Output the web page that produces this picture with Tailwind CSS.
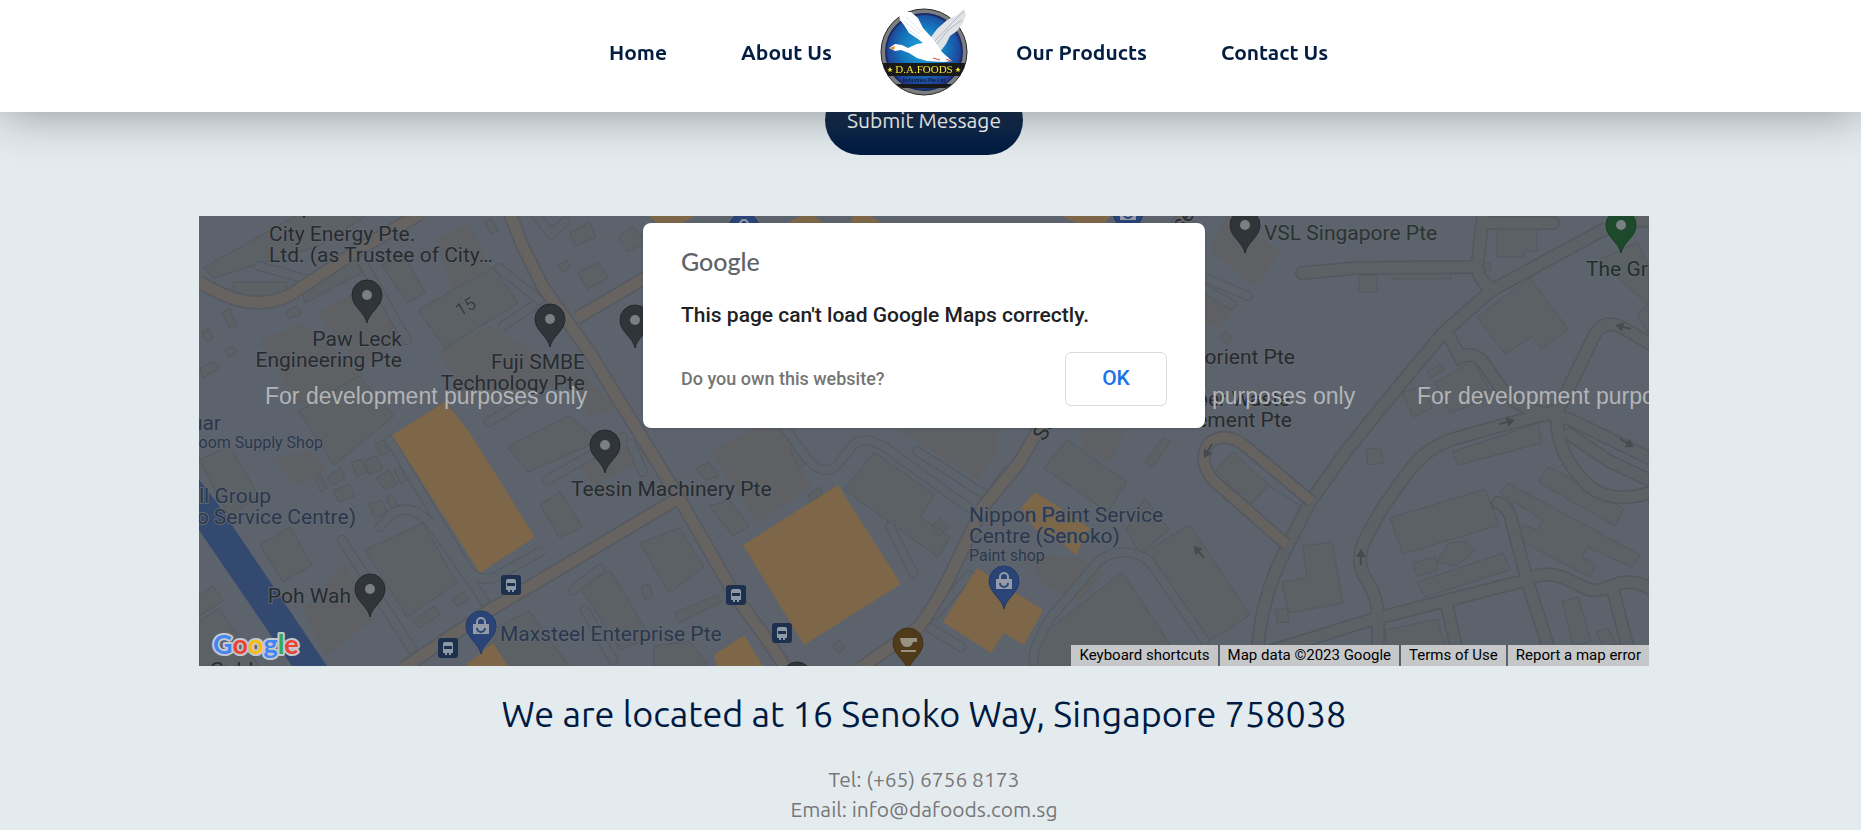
<!DOCTYPE html>
<html lang="en">
<head>
    <title>D.A. Foods Industries - Contact Us</title>
    <meta charset="UTF-8">
    <meta name="viewport" content="width=device-width, initial-scale=1">
    <script src="https://cdn.jsdelivr.net/npm/@tailwindcss/browser@4"></script>
</head>
<body class="bg-[#e4ebef] font-['Ubuntu','Noto_Sans',sans-serif] overflow-x-hidden">

    <!-- Navigation -->
    <header class="fixed inset-x-0 top-0 z-20 bg-white pt-2 pb-4 pr-[13px] shadow-[0_0_50px_rgba(0,0,0,0.4)]">
        <nav class="grid grid-cols-[1fr_88px_1fr] items-center text-[21px] leading-[30px] font-semibold text-[#041e42]">
            <div class="flex justify-end gap-[74px] pr-12">
                <a href="#home">Home</a>
                <a href="#about">About Us</a>
            </div>
            <a href="#home" aria-label="D.A. Foods">
                <svg class="block size-[88px] overflow-visible" viewBox="0 0 88 88">
                    <defs>
                        <radialGradient id="sky" cx="50%" cy="45%" r="52%">
                            <stop offset="0" stop-color="#27a8e0"/>
                            <stop offset=".55" stop-color="#1479bd"/>
                            <stop offset="1" stop-color="#203a92"/>
                        </radialGradient>
                        <clipPath id="disc"><circle cx="44" cy="44" r="43"/></clipPath>
                    </defs>
                    <circle cx="44" cy="44" r="43" fill="#7c7f82" stroke="#2b2726"/>
                    <circle cx="44" cy="44" r="38" fill="url(#sky)" stroke="#1c2b62" stroke-width="2"/>
                    <circle cx="44" cy="44" r="33" fill="none" stroke="#1b5da6" stroke-dasharray="1 4"/>
                    <path d="M84 1L86 7 83 15 77 23 70 28 66 36 60 44 48 33 57 21 67 12 77 7Z" fill="#dfe3e6"/>
                    <path d="M84 3L70 17 55 33M82 12L68 22 57 36" fill="none" stroke="#b3babf"/>
                    <path d="M18 1L22 4 31 4 38 10 43 20 53 31 62 44 72 53 64 54 47 53 37 50 29 45 21 42 15 43 9 40 15 36 22 37 28 40 37 36 43 35 38 31 29 25 24 17 20 12Z" fill="#fff"/>
                    <path d="M27 20L40 30M24 13L40 26M26 9L42 24" fill="none" stroke="#dde5ec"/>
                    <path d="M15 38L9 40 14 42Z" fill="#e98a2b"/>
                    <path d="M53 50L60 52M66 51L71 53" fill="none" stroke="#d6453d"/>
                    <g clip-path="url(#disc)">
                        <rect y="55" width="88" height="13" fill="#191919"/>
                        <path d="M14 76H74L66 80H22Z" fill="#191919"/>
                    </g>
                    <text x="44" y="65" text-anchor="middle" font-family="Liberation Serif, serif" font-size="11" font-weight="400" fill="#f4e63a">D.A.FOODS</text>
                    <text x="44" y="74" text-anchor="middle" font-family="Liberation Sans, sans-serif" font-size="5" fill="#101c40">Industries Pte Ltd</text>
                    <path d="M10 59L11 61 13 61 11 62 12 64 10 63 8 64 9 62 7 61 9 61ZM78 59L79 61 81 61 79 62 80 64 78 63 76 64 77 62 75 61 77 61Z" fill="#f4e63a"/>
                </svg>
            </a>
            <div class="flex gap-[74px] pl-12">
                <a href="#products">Our Products</a>
                <a href="#contact">Contact Us</a>
            </div>
        </nav>
    </header>

    <main class="flex flex-col items-center pt-[85px] pr-[13px]">
        <button type="submit" class="h-[70px] w-[198px] rounded-[35px] bg-linear-to-b from-[#2b3f5c] to-[#001a41] text-[21px] leading-[30px] text-white">Submit Message</button>

        <!-- Map -->
        <section class="relative mt-[61px] h-[450px] w-full max-w-[1450px] overflow-hidden bg-[#5c636c]" aria-label="Map">
            <svg class="block size-full" viewBox="0 0 1450 450" preserveAspectRatio="xMidYMid slice" font-family="Roboto, sans-serif">
                <defs>
                    <g id="pin">
                        <path d="M0 0C-2 -11 -15 -16 -15 -28A15 15 0 0 1 15 -28C15 -16 2 -11 0 0Z"/>
                    </g>
                    <g id="dot"><circle cy="-28" r="5" fill="#7b7f83" stroke="none"/></g>
                    <g id="bag" stroke="none">
                        <path d="M-8 -30H8V-20H-8Z" fill="#949ba6"/>
                        <path d="M-4 -30V-32A4 4 0 0 1 4 -32V-30" fill="none" stroke="#949ba6" stroke-width="2"/>
                        <path d="M-4 -26A4 4 0 0 0 4 -26" fill="none" stroke="#2a4478" stroke-width="2"/>
                    </g>
                    <g id="bus">
                        <rect x="-10" y="-10" width="20" height="20" rx="3" fill="#1d304d"/>
                        <path d="M-5 -4Q-5 -6 -3 -6H3Q5 -6 5 -4V5H3V7H1V5H-1V7H-3V5H-5Z" fill="#8f98a5"/>
                        <path d="M-4 -2H4V1H-4Z" fill="#1d304d"/>
                    </g>
                    <g id="arrow"><path d="M-8 0H3" fill="none" stroke="#464b51" stroke-width="2"/><path d="M8 0L0 -5V5Z" fill="#464b51"/></g>
                    <!-- service lanes and minor roads -->
                    <path id="lanes" d="M1103 57L1158 52 1271 51Q1279 50 1279 44L1284 0M1287 7H1354M1278 52Q1280 64 1293 74
                        M1450 4Q1425 6 1404 14L1293 74 1244 117 1191 181 1148 234 1111 286 1088 331Q1058 388 1058 452
                        M1450 127L1424 112Q1406 102 1396 118L1364 184Q1360 196 1345 199L1311 207 1251 224Q1225 234 1210 255L1184 291 1164 327Q1156 350 1170 368 1179 382 1179 404V450
                        M1251 122L1261 141Q1276 134 1286 149L1301 171Q1320 194 1350 198L1370 203 1450 242
                        M1358 205Q1358 240 1391 271 1415 288 1450 277M1370 218L1410 245 1450 264
                        M1066 437L1171 404 1328 364Q1346 354 1365 362L1391 374Q1400 376 1421 367 1437 364 1450 372
                        M1299 287Q1310 290 1313 307L1328 364 1356 452M1248 390L1262 452M1414 374L1434 452"/>
                    <path id="alleys" d="M181 311L191 299Q211 285 231 307L278 374 292 396M143 324L218 441M348 264L424 221M386 394L414 444M374 374L401 353
                        M584 209L609 244Q630 266 645 240L655 228Q664 220 684 230L770 292M691 311L714 357M736 399L770 359M723 407L762 431M834 445Q836 425 852 401L900 345Q925 327 950 345L1006 425
                        M191 224L268 352Q278 366 294 362L341 336M160 40L208 124M300 52L340 84M304 110L334 90M290 206L340 176M432 228L444 256M718 235L788 280M1006 62L1049 80M1000 70L1032 88M338 0L352 18 366 6M60 50L110 64"/>
                </defs>

                <rect width="1450" height="450" fill="#5c636c"/>

                <!-- brown plots -->
                <g fill="#5f6063">
                    <path d="M237 24L270 8 290 50 254 74ZM119 97L164 71 204 121 160 150ZM61 125L100 108 130 130 165 160 100 190ZM240 135L290 110 350 145 380 165 270 190ZM74 244L110 235 129 254 98 269ZM104 394L144 347 178 400 126 440ZM512 236L559 211 584 214 612 271 559 307ZM700 213H800L797 240 777 264ZM882 214H925L912 246 884 234ZM829 340L880 342 905 356 880 386 845 368ZM1010 34L1028 0 1062 22 1081 34 1056 70ZM1006 70L1041 86 1020 113 1006 106ZM380 250L440 225 450 240 395 270ZM370 150L420 190 390 202Z"/>
                </g>
                <!-- grey plots and buildings -->
                <g fill="#5c6165" stroke="#545960">
                    <path d="M4 52L100 -2H170L120 30 60 48 15 62ZM34 66H88V80H34ZM103 76L154 41 164 56 106 87ZM183 49L208 87 226 76 204 38ZM219 94L294 51 319 87 246 132ZM371 17L391 6 397 21 376 30ZM379 57L399 46 409 62 389 73ZM419 21L434 11 448 26 429 36ZM359 49L368 44 371 51 364 57ZM23 96L31 93 38 110 30 112ZM3 116L10 113 14 122 7 126ZM26 134L34 130 38 136 30 141ZM1 152L15 145 20 152 4 162ZM86 96L98 90 102 98 90 103ZM330 76L340 71 346 80 334 86ZM285 6L292 2 300 14 292 18Z"/>
                    <path d="M100 195L160 160 195 200 135 249ZM61 329L91 311 113 349 84 366ZM166 334L224 307 258 367 208 401ZM341 289L361 276 383 311 361 322ZM308 231L370 200 400 225 329 256ZM381 371L411 354 451 421 421 434ZM441 327L480 312 505 351 470 377ZM475 397L518 379 523 386 480 407ZM128 262L142 251 146 262 134 269ZM152 247L162 243 168 256 158 260ZM166 244L178 240 184 253 170 258ZM176 228L184 224 190 236 182 240ZM134 275L150 268 156 280 140 286ZM177 262L190 254 198 268 186 274ZM195 254L201 250 208 264 202 268ZM170 288L182 284 188 296 176 302ZM187 282L193 278 199 290 193 294ZM116 263L122 260 128 272 122 276ZM213 405L235 390 242 398 220 412ZM253 384L264 376 270 384 258 390ZM0 244L30 230 60 280 30 300ZM510 290L530 284 550 310 534 320ZM497 253L510 246 520 260 506 264ZM592 236L598 233 606 248 600 252ZM442 370L450 368 454 380 446 384ZM0 380L14 370 24 385 0 400ZM0 405L20 393 60 450H0ZM280 420L330 395 370 450H310ZM455 430L490 425 510 450H455Z"/>
                    <path d="M645 274L675 236 736 279 721 301 751 321 739 341ZM845 252L868 224 928 266 909 296ZM927 314L946 282 970 314 941 337ZM733 310L741 302 749 310 741 320ZM784 281L806 250 810 258 790 286ZM608 280L620 271 624 278 612 285ZM633 430L640 424 645 432 640 438ZM944 337L991 309 1051 399 1004 429ZM834 426L923 356 985 450H840ZM946 246L964 222 972 226 952 252Z"/>
                    <path d="M1278 101L1331 62 1369 113 1342 133 1333 121 1306 138ZM1298 13H1338V35H1325V41H1298ZM1160 59H1178V76H1160ZM1193 57H1252V63H1193ZM1203 177L1224 169 1233 192 1214 201ZM1236 167L1274 144 1294 181 1251 197ZM1228 156L1242 148 1246 154 1232 162ZM1253 236L1339 207 1343 227 1259 249ZM1167 233L1182 232 1184 247 1169 249ZM1191 302L1286 273 1300 309 1204 338ZM1214 347L1236 341 1239 354 1218 360ZM1218 366L1304 337 1311 354 1226 381ZM1301 277L1309 267 1441 339 1433 351 1388 331 1383 341 1397 349 1391 361 1316 322 1324 309 1339 314 1344 304ZM1339 266L1349 251 1386 269 1391 264 1404 272 1403 279 1425 293 1416 310ZM1104 330L1133 326 1144 387 1090 397 1083 366 1108 362ZM1077 394L1088 392 1090 406 1078 407ZM1186 414L1239 403 1246 431 1191 450ZM1017 254L1034 236 1069 268 1051 288ZM1363 385L1379 381 1392 425 1374 430ZM1397 416L1408 412 1418 428 1404 430ZM1238 346L1250 327 1266 325 1276 335 1256 350ZM1281 47H1292V54H1281ZM1021 121L1027 116 1034 124 1028 129ZM1400 44L1438 26 1450 50V90ZM1438 98L1450 88V118Z"/>
                </g>
                <path d="M1051 289L1070 270 1103 291 1088 321" fill="none" stroke="#545960"/>

                <g fill="none" stroke-linecap="round">
                    <use href="#alleys" stroke="#545960" stroke-width="10"/>
                    <use href="#alleys" stroke="#5d636a" stroke-width="8"/>
                    <use href="#lanes" stroke="#53585f" stroke-width="14"/>
                    <use href="#lanes" stroke="#5b6165" stroke-width="11"/>
                </g>
                <g fill="none" stroke-linejoin="round">
                    <path d="M1113 286L1051 234Q1028 213 1010 227 998 244 1014 264L1088 329" stroke="#53585f" stroke-width="13"/>
                    <path d="M1113 286L1051 234Q1028 213 1010 227 998 244 1014 264L1088 329" stroke="#666260" stroke-width="10"/>
                </g>

                <!-- river -->
                <path d="M0 264L16 284 128 450H93L0 314Z" fill="#34496f"/>

                <!-- main roads -->
                <g fill="none" stroke="#555960" stroke-width="14">
                    <path d="M0 66L11 72Q55 97 91 79L164 31 221 -2M311 -2L324 31 344 71 391 137 434 207 480 282 537 381 566 421 587 452M378 102L451 59M204 452L291 394 478 283M662 452L720 411Q740 385 762 337L784 291 820 247 900 110 987 -2"/>
                </g>
                <g fill="none" stroke="#666361" stroke-width="11">
                    <path d="M0 66L11 72Q55 97 91 79L164 31 221 -2M311 -2L324 31 344 71 391 137 434 207 480 282 537 381 566 421 587 452M378 102L451 59M204 452L291 394 478 283M662 452L720 411Q740 385 762 337L784 291 820 247 900 110 987 -2"/>
                </g>

                <!-- commercial buildings -->
                <g fill="#7e6648">
                    <path d="M193 219L246 186 269 214 336 321 281 357ZM544 329L639 269 702 368 605 429ZM744 406L778 352 844 394 825 429 805 417 792 437ZM822 292L836 276 861 292 891 312 877 339 855 321 837 314ZM515 439L545 419 564 450H518ZM266 450L294 427 309 450ZM450 0H496L482 8H459ZM586 8L602 0H615L626 8ZM651 8L654 0H672L684 8ZM863 0H911L905 8H880Z"/>
                </g>

                <!-- road directions -->
                <use href="#arrow" transform="translate(1424 111) rotate(195)"/>
                <use href="#arrow" transform="translate(1308 206) rotate(-15)"/>
                <use href="#arrow" transform="translate(1428 227) rotate(30)"/>
                <use href="#arrow" transform="translate(1162 341) rotate(-88)"/>
                <use href="#arrow" transform="translate(1000 336) rotate(-130)"/>
                <use href="#arrow" transform="translate(1009 235) rotate(120)"/>

                <!-- bus stops -->
                <use href="#bus" x="312" y="369"/>
                <use href="#bus" x="249" y="432"/>
                <use href="#bus" x="537" y="379"/>
                <use href="#bus" x="583" y="417"/>

                <!-- pins -->
                <g fill="#303539" stroke="#25292d">
                    <use href="#pin" x="105" y="2"/>
                    <use href="#pin" x="168" y="107"/><use href="#dot" x="168" y="107"/>
                    <use href="#pin" x="351" y="131"/><use href="#dot" x="351" y="131"/>
                    <use href="#pin" x="436" y="132"/><use href="#dot" x="436" y="132"/>
                    <use href="#pin" x="406" y="257"/><use href="#dot" x="406" y="257"/>
                    <use href="#pin" x="171" y="401"/><use href="#dot" x="171" y="401"/>
                    <use href="#pin" x="598" y="489"/>
                    <use href="#pin" x="1046" y="37"/><use href="#dot" x="1046" y="37"/>
                </g>
                <g fill="#2a4478" stroke="#223a68">
                    <use href="#pin" x="282" y="438"/><use href="#bag" x="282" y="438"/>
                    <use href="#pin" x="805" y="393"/><use href="#bag" x="805" y="393"/>
                    <use href="#pin" x="545" y="40"/><use href="#bag" x="545" y="40"/>
                    <use href="#pin" x="929" y="24"/><use href="#bag" x="929" y="24"/>
                </g>
                <g fill="#1d4a2a" stroke="#163a20"><use href="#pin" x="1422" y="37"/><use href="#dot" x="1422" y="37"/></g>
                <g fill="#4f3a1a" stroke="#453216"><use href="#pin" x="709" y="455"/></g>
                <path d="M701 422H718V426H714Q713 431 708 431 702 431 701 422ZM702 434H717V436H702Z" fill="#989284"/>

                <!-- place names -->
                <g font-size="21" fill="#282b2f" stroke="#61676e" stroke-width="2" paint-order="stroke" stroke-linejoin="round">
                    <text x="70" y="25">City Energy Pte.</text>
                    <text x="70" y="46">Ltd. (as Trustee of City…</text>
                    <text x="203" y="130" text-anchor="end">Paw Leck</text>
                    <text x="203" y="151" text-anchor="end">Engineering Pte</text>
                    <text x="386" y="153" text-anchor="end">Fuji SMBE</text>
                    <text x="386" y="174" text-anchor="end">Technology Pte</text>
                    <text x="152" y="387" text-anchor="end">Poh Wah</text>
                    <text x="372" y="280">Teesin Machinery Pte</text>
                    <text x="1096" y="148" text-anchor="end">orient Pte</text>
                    <text x="1091" y="190" text-anchor="end">per Waste</text>
                    <text x="1093" y="211" text-anchor="end">ement Pte</text>
                    <text x="11" y="461">Gold</text>
                    <text x="1065" y="24" fill="#2b3433">VSL Singapore Pte</text>
                    <text x="1387" y="60" fill="#223029">The Gr</text>
                    <text font-size="18" fill="#383c41" transform="translate(261 101) rotate(-30)">15</text>
                    <text transform="translate(845 226) rotate(-58)">Se</text>
                    <text transform="translate(982 16) rotate(-50)">se</text>
                </g>
                <g font-size="21" fill="#2b374e" stroke="#61676e" stroke-width="2" paint-order="stroke" stroke-linejoin="round">
                    <text x="22" y="214" text-anchor="end">uar</text>
                    <text x="124" y="232" text-anchor="end" font-size="16">oom Supply Shop</text>
                    <text x="72" y="287" text-anchor="end">ll Group</text>
                    <text x="157" y="308" text-anchor="end">o Service Centre)</text>
                    <text x="301" y="425">Maxsteel Enterprise Pte</text>
                    <text x="770" y="306">Nippon Paint Service</text>
                    <text x="770" y="327">Centre (Senoko)</text>
                    <text x="770" y="345" font-size="16">Paint shop</text>
                </g>

                <!-- watermark -->
                <g font-family="Liberation Sans, Arial, sans-serif" font-size="23" fill="#b2b4b7">
                    <text x="66" y="188">For development purposes only</text>
                    <text x="450" y="188">For development purposes only</text>
                    <text x="834" y="188">For development purposes only</text>
                    <text x="1218" y="188">For development purposes only</text>
                </g>

                <text x="14" y="438" font-family="Lato, sans-serif" font-size="27" font-weight="700" stroke="#c4c8cc" stroke-width="4" paint-order="stroke" stroke-linejoin="round"><tspan fill="#4285f4">G</tspan><tspan fill="#ea4335">o</tspan><tspan fill="#fbbc05">o</tspan><tspan fill="#4285f4">g</tspan><tspan fill="#34a853">l</tspan><tspan fill="#ea4335">e</tspan></text>
            </svg>

            <div class="absolute right-0 bottom-0 flex h-[21px] gap-[2px] font-['Roboto',sans-serif] text-[15px] leading-[21px] text-black">
                <button type="button" class="bg-[#c6c7c9] px-2">Keyboard shortcuts</button>
                <span class="bg-[#c6c7c9] px-2">Map data ©2023 Google</span>
                <a href="#terms" class="bg-[#c6c7c9] px-2">Terms of Use</a>
                <a href="#report" class="bg-[#c6c7c9] px-2">Report a map error</a>
            </div>

            <div role="dialog" aria-labelledby="map-error" class="absolute top-[7px] left-1/2 w-[562px] -translate-x-1/2 rounded-lg bg-white px-[38px] pt-5 pb-[22px] font-['Roboto',sans-serif] font-medium shadow-sm">
                <div class="font-['Lato',sans-serif] text-[25px] leading-9 text-[#5f6368]">Google</div>
                <p id="map-error" class="mt-5 text-[21px] leading-8 text-[#202124]">This page can't load Google Maps correctly.</p>
                <div class="mt-[21px] flex items-center justify-between">
                    <a href="#website" class="text-lg text-[#757575]">Do you own this website?</a>
                    <button type="button" class="h-[54px] w-[102px] rounded-md border border-[#dadce0] text-[21px] text-[#1a73e8]">OK</button>
                </div>
            </div>
        </section>

        <!-- Address -->
        <h1 class="mt-[22px] text-4xl leading-[52px] text-[#001a41]">We are located at 16 Senoko Way, Singapore 758038</h1>
        <address class="mt-6 text-center text-[21px] leading-[30px] text-[#777] not-italic">
            <p>Tel: (+65) 6756 8173</p>
            <p>Email: info@dafoods.com.sg</p>
        </address>
    </main>
</body>
</html>
